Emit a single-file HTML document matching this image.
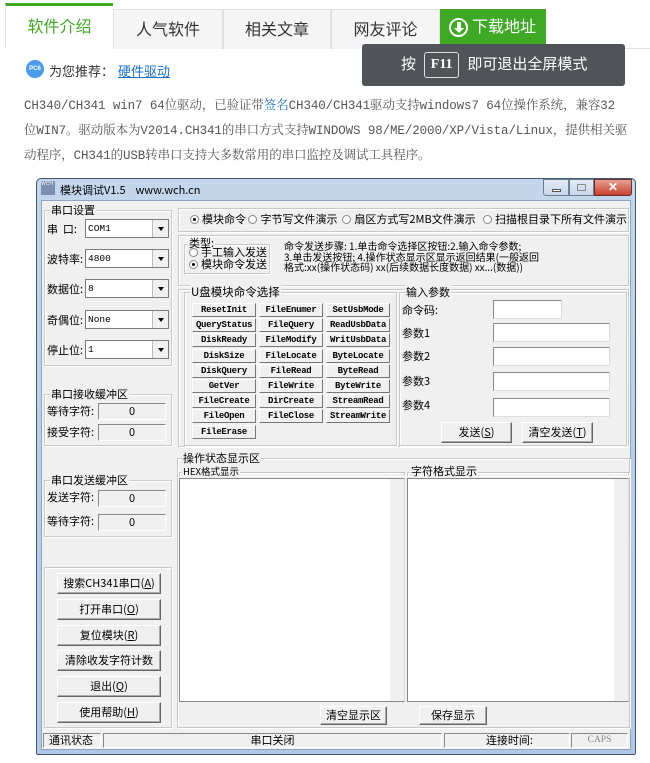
<!DOCTYPE html>
<html><head><meta charset="utf-8"><style>
*{box-sizing:border-box;margin:0;padding:0}
body{width:650px;height:763px;background:#fff;position:relative;overflow:hidden;font-family:"Liberation Sans","Noto Sans CJK SC",sans-serif}
.a{position:absolute}
.tab{position:absolute;top:9px;height:40px;background:#f5f5f5;border:1px solid #e0e0e0;border-bottom:none;font-size:16px;color:#333;text-align:center;line-height:42px}
.p{position:absolute;left:24px;font-family:"Liberation Mono","Noto Serif CJK SC",monospace;font-size:12.5px;color:#555;white-space:nowrap;letter-spacing:-0.1px}
.w{font-family:"Noto Sans CJK SC",sans-serif;font-size:11px;color:#000;white-space:nowrap}
.g{position:absolute;border:1px solid #c8c8c8;box-shadow:inset 1px 1px 0 #fff,1px 1px 0 #fff}
.gl{position:absolute;top:-9px;left:5px;background:#f0f0f0;padding:0 1px;font-size:11px;line-height:16px}
.cb{position:absolute;left:85px;width:84px;height:19px;background:#fff;border:1px solid #7a7a7a;font-family:"Liberation Mono",monospace;font-size:9.5px;line-height:17px;padding-left:2px}
.cb:after{content:"";position:absolute;right:0;top:0;width:15px;height:17px;background:#f0f0f0;border-left:1px solid #bbb}
.cb:before{content:"";position:absolute;right:4px;top:7px;border:3.5px solid transparent;border-top:4px solid #000;z-index:2}
.lb{position:absolute;left:47px;font-size:11px}
.fd{position:absolute;left:98px;width:68px;height:17px;border:1px solid #888;border-right-color:#fff;border-bottom-color:#fff;background:#f0f0f0;text-align:center;font-size:11px;line-height:15px}
.bt{position:absolute;background:#f0f0f0;border:1px solid;border-color:#fff #666 #666 #fff;box-shadow:inset -1px -1px 0 #aaa;text-align:center;font-size:11px}
.cm{position:absolute;width:64px;height:14px;background:#f0f0f0;border:1px solid;border-color:#fff #777 #777 #fff;text-align:center;font-family:"Liberation Mono",monospace;font-weight:bold;font-size:9px;line-height:12px;letter-spacing:-0.3px}
.in{position:absolute;left:493px;width:117px;height:19px;background:#fff;border:1px solid #888;border-right-color:#ddd;border-bottom-color:#ddd}
.rd{display:inline-block;width:9px;height:9px;border:1px solid #888;border-radius:50%;background:#fff;vertical-align:-1px;margin-right:3px;position:relative}
.rd.on:after{content:"";position:absolute;left:2px;top:2px;width:3px;height:3px;background:#000;border-radius:50%}
</style></head><body>
<!-- tabs -->
<div class="a" style="left:113px;top:48px;width:537px;height:1px;background:#e0e0e0"></div>
<div class="a" style="left:5px;top:3px;width:108px;height:46px;background:#fff;border-left:1px solid #e0e0e0;border-top:3px solid #3ea924;font-size:16px;color:#3ea924;text-align:center;line-height:44px">软件介绍</div>
<div class="tab" style="left:113px;width:110px">人气软件</div>
<div class="tab" style="left:223px;width:108px">相关文章</div>
<div class="tab" style="left:331px;width:109px">网友评论</div>
<div class="a" style="left:440px;top:9px;width:106px;height:35px;background:#3ea924;color:#fff;font-size:16px;line-height:37px;padding-left:32px;white-space:nowrap">下载地址</div>
<div class="a" style="left:449px;top:18px;width:19px;height:19px;border:2px solid #fff;border-radius:50%"><div class="a" style="left:5.5px;top:2px;width:4px;height:6px;background:#fff"></div><div class="a" style="left:2.5px;top:8px;border:5px solid transparent;border-top:5px solid #fff"></div></div>
<div class="a" style="left:362px;top:44px;width:263px;height:42px;background:#505357;border-radius:3px;color:#fff;font-size:15px;line-height:42px;padding-left:39px;white-space:nowrap">按 <span style="display:inline-block;border:1px solid #ddd;border-radius:3px;width:35px;height:26px;line-height:24px;text-align:center;font-family:'Liberation Serif',serif;font-weight:bold;font-size:14px;vertical-align:middle;margin:0 4px">F11</span> 即可退出全屏模式</div>
<div class="a" style="left:26px;top:60px;width:18px;height:18px;border-radius:50%;background:#4a9ce8;color:#fff;font-size:6px;line-height:18px;text-align:center;font-weight:bold">PC6</div>
<div class="a" style="left:49px;top:61px;font-size:13px;color:#333">为您推荐：</div>
<div class="a" style="left:118px;top:61px;font-size:13px;color:#1a6fc0;text-decoration:underline">硬件驱动</div>
<div class="p" style="top:95px">CH340/CH341 win7 64位驱动，已验证带<span style="color:#1a6fc0">签名</span>CH340/CH341驱动支持windows7 64位操作系统，兼容32</div>
<div class="p" style="top:120px">位WIN7。驱动版本为V2014.CH341的串口方式支持WINDOWS 98/ME/2000/XP/Vista/Linux，提供相关驱</div>
<div class="p" style="top:145px">动程序，CH341的USB转串口支持大多数常用的串口监控及调试工具程序。</div>

<!-- window -->
<div class="a w" style="left:36px;top:178px;width:600px;height:577px;background:linear-gradient(#c3d6ec,#aec8e6);border:1px solid #44586f;border-radius:5px 5px 2px 2px"></div>
<div class="a w" style="left:41px;top:200px;width:590px;height:550px;background:#f0f0f0;border:1px solid #8ea6c2"></div>
<div class="a" style="left:41px;top:181px;width:14px;height:14px;background:#7d8fb0;font-size:5px;color:#fff">WCH</div>
<div class="a w" style="left:60px;top:182px;font-size:11px">模块调试V1.5 &nbsp;&nbsp; www.wch.cn</div>
<div class="a" style="left:543px;top:179px;width:26px;height:17px;border:1px solid #6a7f9c;border-radius:0 0 0 3px;background:linear-gradient(#e4ecf6,#c6d6ea)"><div class="a" style="left:8px;top:9px;width:9px;height:3px;background:#fff;border:1px solid #555"></div></div>
<div class="a" style="left:569px;top:179px;width:25px;height:17px;border:1px solid #6a7f9c;background:linear-gradient(#e4ecf6,#c6d6ea)"><div class="a" style="left:7px;top:4px;width:9px;height:7px;border:1px solid #888"></div></div>
<div class="a" style="left:594px;top:179px;width:38px;height:17px;border:1px solid #6a3030;border-radius:0 0 3px 0;background:linear-gradient(#e8a090,#c8412c);color:#fff;font-weight:bold;font-size:12px;text-align:center;line-height:15px">✕</div>

<div class="w">
<div class="g" style="left:44px;top:210px;width:128px;height:156px"><div class="gl">串口设置</div></div>
<div class="lb" style="top:221px">串 &nbsp;口:</div><div class="cb" style="top:219px">COM1</div>
<div class="lb" style="top:251px">波特率:</div><div class="cb" style="top:249px">4800</div>
<div class="lb" style="top:281px">数据位:</div><div class="cb" style="top:279px">8</div>
<div class="lb" style="top:312px">奇偶位:</div><div class="cb" style="top:310px">None</div>
<div class="lb" style="top:342px">停止位:</div><div class="cb" style="top:340px">1</div>

<div class="g" style="left:44px;top:394px;width:128px;height:52px"><div class="gl">串口接收缓冲区</div></div>
<div class="lb" style="top:403px">等待字符:</div><div class="fd" style="top:403px">0</div>
<div class="lb" style="top:424px">接受字符:</div><div class="fd" style="top:424px">0</div>

<div class="g" style="left:44px;top:480px;width:128px;height:57px"><div class="gl">串口发送缓冲区</div></div>
<div class="lb" style="top:489px">发送字符:</div><div class="fd" style="top:490px">0</div>
<div class="lb" style="top:513px">等待字符:</div><div class="fd" style="top:514px">0</div>

<div class="g" style="left:44px;top:567px;width:128px;height:161px"></div>
<div class="bt" style="left:57px;top:573px;width:104px;height:21px;line-height:19px">搜索CH341串口(<u>A</u>)</div>
<div class="bt" style="left:57px;top:599px;width:104px;height:21px;line-height:19px">打开串口(<u>O</u>)</div>
<div class="bt" style="left:57px;top:625px;width:104px;height:21px;line-height:19px">复位模块(<u>R</u>)</div>
<div class="bt" style="left:57px;top:650px;width:104px;height:21px;line-height:19px">清除收发字符计数</div>
<div class="bt" style="left:57px;top:676px;width:104px;height:21px;line-height:19px">退出(<u>Q</u>)</div>
<div class="bt" style="left:57px;top:702px;width:104px;height:21px;line-height:19px">使用帮助(<u>H</u>)</div>

<div class="g" style="left:178px;top:208px;width:451px;height:24px"></div>
<div class="a" style="left:190px;top:211px;font-size:11px"><span class="rd on"></span>模块命令 <span class="rd"></span>字节写文件演示 &nbsp;<span class="rd"></span>扇区方式写2MB文件演示 &nbsp;&nbsp;<span class="rd"></span>扫描根目录下所有文件演示</div>
<div class="g" style="left:178px;top:235px;width:451px;height:51px"></div>
<div class="g" style="left:184px;top:244px;width:86px;height:30px"><div class="gl" style="left:3px;top:-8px;line-height:12px">类型:</div></div>
<div class="a" style="left:189px;top:246px;font-size:11px;line-height:12px"><span class="rd"></span>手工输入发送<br><span class="rd on"></span>模块命令发送</div>
<div class="a" style="left:284px;top:241px;font-size:10px;line-height:10.5px">命令发送步骤: 1.单击命令选择区按钮:2.输入命令参数;<br>3.单击发送按钮; 4.操作状态显示区显示返回结果(一般返回<br>格式:xx(操作状态码) xx(后续数据长度数据) xx...(数据))</div>

<div class="g" style="left:178px;top:289px;width:451px;height:158px"></div>
<div class="g" style="left:184px;top:292px;width:213px;height:154px"><div class="gl" style="font-size:11.5px">U盘模块命令选择</div></div>
<div class="g" style="left:399px;top:292px;width:228px;height:154px"><div class="gl">输入参数</div></div>

<div class="cm" style="left:192px;top:303px">ResetInit</div><div class="cm" style="left:259px;top:303px">FileEnumer</div><div class="cm" style="left:326px;top:303px">SetUsbMode</div>
<div class="cm" style="left:192px;top:318px">QueryStatus</div><div class="cm" style="left:259px;top:318px">FileQuery</div><div class="cm" style="left:326px;top:318px">ReadUsbData</div>
<div class="cm" style="left:192px;top:333px">DiskReady</div><div class="cm" style="left:259px;top:333px">FileModify</div><div class="cm" style="left:326px;top:333px">WritUsbData</div>
<div class="cm" style="left:192px;top:349px">DiskSize</div><div class="cm" style="left:259px;top:349px">FileLocate</div><div class="cm" style="left:326px;top:349px">ByteLocate</div>
<div class="cm" style="left:192px;top:364px">DiskQuery</div><div class="cm" style="left:259px;top:364px">FileRead</div><div class="cm" style="left:326px;top:364px">ByteRead</div>
<div class="cm" style="left:192px;top:379px">GetVer</div><div class="cm" style="left:259px;top:379px">FileWrite</div><div class="cm" style="left:326px;top:379px">ByteWrite</div>
<div class="cm" style="left:192px;top:394px">FileCreate</div><div class="cm" style="left:259px;top:394px">DirCreate</div><div class="cm" style="left:326px;top:394px">StreamRead</div>
<div class="cm" style="left:192px;top:409px">FileOpen</div><div class="cm" style="left:259px;top:409px">FileClose</div><div class="cm" style="left:326px;top:409px">StreamWrite</div>
<div class="cm" style="left:192px;top:425px">FileErase</div>

<div class="a" style="left:402px;top:302px">命令码:</div><div class="in" style="top:300px;width:69px"></div>
<div class="a" style="left:402px;top:325px">参数1</div><div class="in" style="top:323px"></div>
<div class="a" style="left:402px;top:348px">参数2</div><div class="in" style="top:347px"></div>
<div class="a" style="left:402px;top:373px">参数3</div><div class="in" style="top:372px"></div>
<div class="a" style="left:402px;top:397px">参数4</div><div class="in" style="top:398px"></div>
<div class="bt" style="left:441px;top:422px;width:71px;height:21px;line-height:19px">发送(<u>S</u>)</div>
<div class="bt" style="left:522px;top:422px;width:71px;height:21px;line-height:19px">清空发送(<u>T</u>)</div>

<div class="g" style="left:177px;top:458px;width:453px;height:270px"><div class="gl" style="left:4px">操作状态显示区</div></div>
<div class="g" style="left:179px;top:472px;width:226px;height:4px;border-bottom:none"><div class="gl" style="left:2px;font-size:9.5px;top:-8px;line-height:12px">HEX格式显示</div></div>
<div class="g" style="left:407px;top:472px;width:222px;height:4px;border-bottom:none"><div class="gl" style="left:2px;top:-8px;line-height:12px">字符格式显示</div></div>
<div class="a" style="left:179px;top:478px;width:226px;height:224px;background:#fff;border:1px solid #888;border-right-color:#ddd"><div class="a" style="right:0;top:0;width:14px;height:222px;background:#f0f0f0"></div></div>
<div class="a" style="left:407px;top:478px;width:222px;height:224px;background:#fff;border:1px solid #888;border-right-color:#ddd"><div class="a" style="right:0;top:0;width:14px;height:222px;background:#f0f0f0"></div></div>
<div class="bt" style="left:320px;top:706px;width:67px;height:19px;line-height:17px">清空显示区</div>
<div class="bt" style="left:419px;top:706px;width:68px;height:19px;line-height:17px">保存显示</div>

<div class="a" style="left:43px;top:732px;width:586px;height:16px;background:#f0f0f0"></div>
<div class="a" style="left:43px;top:733px;width:58px;height:15px;border:1px solid;border-color:#888 #fff #fff #888;padding-left:5px;line-height:13px">通讯状态</div>
<div class="a" style="left:103px;top:733px;width:339px;height:15px;border:1px solid;border-color:#888 #fff #fff #888;text-align:center;line-height:13px">串口关闭</div>
<div class="a" style="left:444px;top:733px;width:126px;height:15px;border:1px solid;border-color:#888 #fff #fff #888;text-align:right;padding-right:36px;line-height:13px">连接时间:</div>
<div class="a" style="left:571px;top:733px;width:57px;height:15px;border:1px solid;border-color:#888 #fff #fff #888;text-align:center;color:#888;font-family:'Liberation Serif',serif;font-size:9.5px;line-height:13px">CAPS</div>
</div>
</body></html>
